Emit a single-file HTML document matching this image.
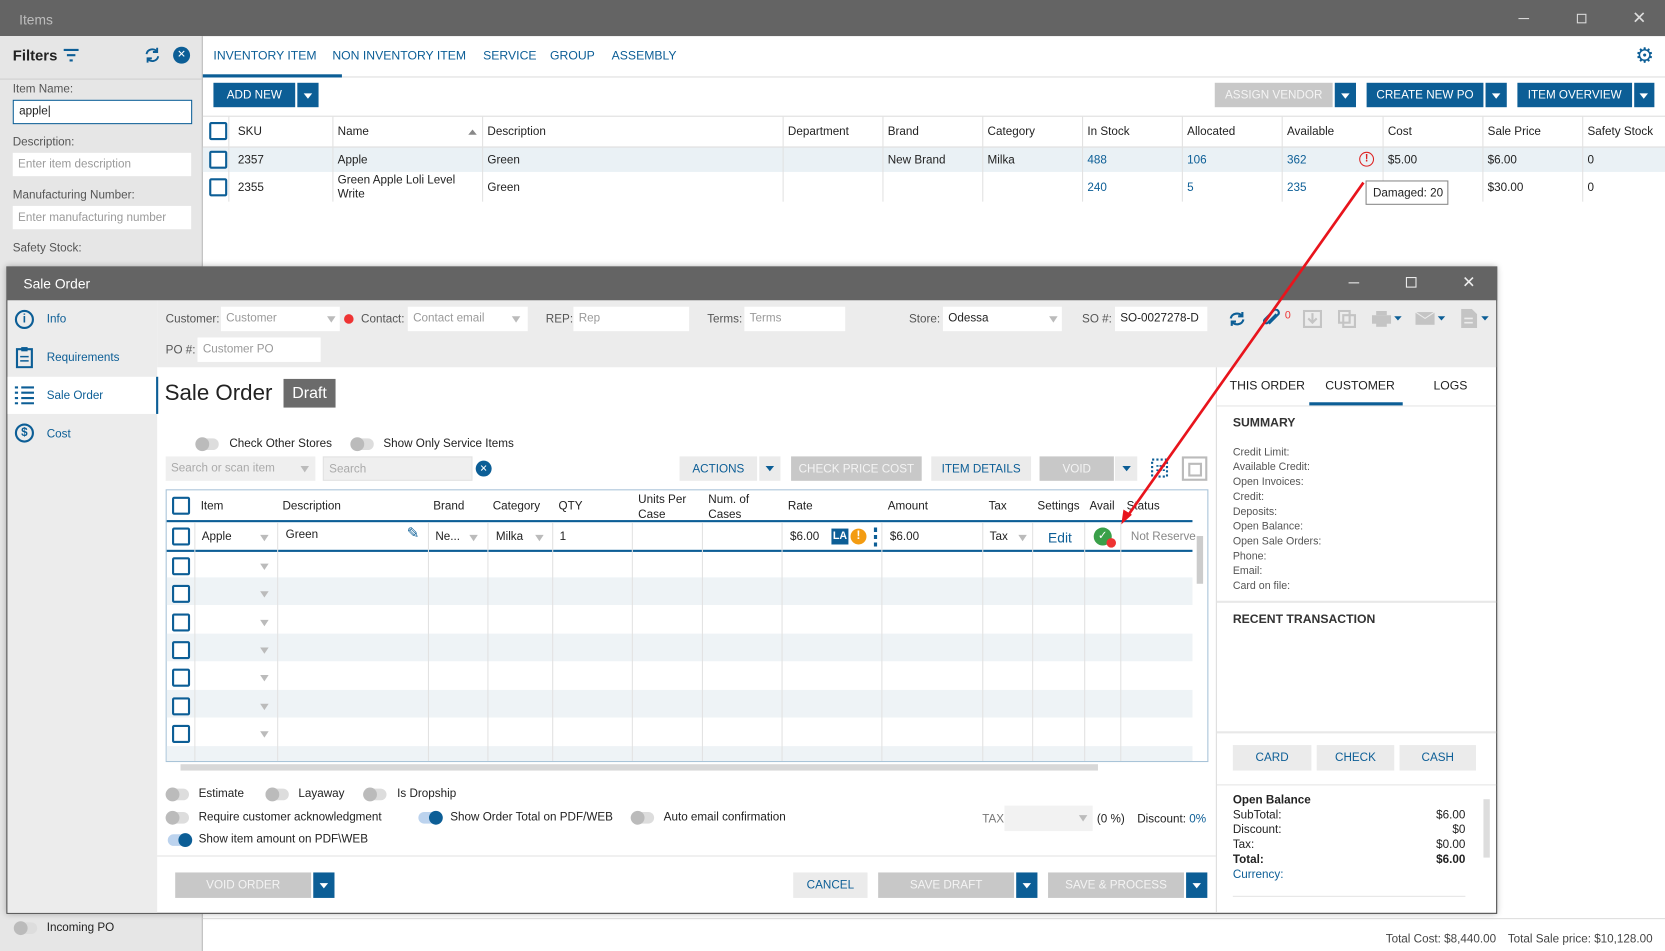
<!DOCTYPE html>
<html><head><meta charset="utf-8"><style>
*{box-sizing:border-box;margin:0;padding:0}
html,body{width:1665px;height:951px;overflow:hidden;background:#fff}
#w{position:absolute;left:0;top:0;width:1568px;height:896px;transform:scale(1.06186,1.06138);transform-origin:0 0;font-family:"Liberation Sans",sans-serif;font-size:11px;color:#222}
.a{position:absolute;white-space:nowrap}
.t{margin-top:1px}
.b{color:#0c5e96}
.btn{position:absolute;background:#0c5e96;color:#fff;text-align:center;font-size:11px}
.gb{position:absolute;background:#c8c8c8;color:#f4f4f4;text-align:center;font-size:11px}
.lb{position:absolute;background:#ebebeb;color:#0c5e96;text-align:center;font-size:11px}
.cb{position:absolute;width:17px;height:17px;border:2px solid #0c5e96;border-radius:2px;background:#fff}
.in{position:absolute;background:#fff;color:#9a9a9a;padding-left:5px;font-size:11px}
.tg{position:absolute;width:22px;height:11px;border-radius:6px;background:#ddd}
.tg:after{content:"";position:absolute;left:0;top:-1px;width:13px;height:13px;border-radius:50%;background:#bbb}
.tg.on{background:#bcd3ee}.tg.on:after{left:10px;background:#0c5e96}
.dd{position:absolute;width:0;height:0;border-left:4px solid transparent;border-right:4px solid transparent;border-top:5px solid #fff}
.gd{position:absolute;width:0;height:0;border-left:4px solid transparent;border-right:4px solid transparent;border-top:6px solid #bbb}
.vl{position:absolute;width:1px;background:#e2e2e2}
.tb{font-size:11.5px}
</style></head><body><div id="w">
<!-- top bar -->
<div class="a" style="left:0;top:0;width:1568px;height:34px;background:#646464"></div>
<div class="a" style="left:18px;top:11px;color:#bdbdbd;font-size:13px">Items</div>
<div class="a" style="left:1430px;top:17px;width:10px;height:1px;background:#ddd"></div>
<div class="a" style="left:1485px;top:13px;width:9px;height:9px;border:1px solid #ddd"></div>
<div class="a" style="left:1537px;top:7px;color:#ddd;font-size:16px">✕</div>
<!-- filter panel -->
<div class="a" style="left:0;top:34px;width:191px;height:862px;background:#e6e6e6;border-right:1px solid #bbb"></div>
<div class="a" style="left:12px;top:44px;font-weight:bold;font-size:14px">Filters</div>
<svg class="a" style="left:59px;top:45px" width="16" height="14"><path d="M1 2h14M4 7h8M6.5 12h3" stroke="#0c5e96" stroke-width="2"/></svg>
<svg class="a" style="left:135px;top:44px" width="17" height="16"><path d="M3 7a5.5 5.5 0 0 1 10-2M14 9a5.5 5.5 0 0 1-10 2" stroke="#0c5e96" stroke-width="1.8" fill="none"/><path d="M13 1v4h-4M4 15v-4h4" stroke="#0c5e96" stroke-width="1.8" fill="none"/></svg>
<div class="a" style="left:163px;top:44px;width:16px;height:16px;border-radius:50%;background:#0c5e96;color:#fff;font-size:10px;text-align:center;line-height:16px">✕</div>
<div class="a" style="left:0;top:74px;width:190px;height:1px;background:#d0d0d0"></div>
<div class="a" style="left:12px;top:78px;color:#555">Item Name:</div>
<div class="in" style="left:12px;top:94px;width:169px;height:23px;border:1px solid #0c5e96;color:#222;line-height:21px">apple|</div>
<div class="a" style="left:12px;top:128px;color:#555">Description:</div>
<div class="in" style="left:12px;top:144px;width:168px;height:22px;line-height:22px">Enter item description</div>
<div class="a" style="left:12px;top:178px;color:#555">Manufacturing Number:</div>
<div class="in" style="left:12px;top:194px;width:168px;height:22px;line-height:22px">Enter manufacturing number</div>
<div class="a" style="left:12px;top:228px;color:#555">Safety Stock:</div>
<div class="tg" style="left:13px;top:869px"></div>
<div class="a" style="left:44px;top:868px">Incoming PO</div>
<!-- tabs -->
<div class="a b tb" style="left:201px;top:47px">INVENTORY ITEM</div>
<div class="a b tb" style="left:313px;top:47px">NON INVENTORY ITEM</div>
<div class="a b tb" style="left:455px;top:47px">SERVICE</div>
<div class="a b tb" style="left:518px;top:47px">GROUP</div>
<div class="a b tb" style="left:576px;top:47px">ASSEMBLY</div>
<div class="a" style="left:191px;top:72px;width:1377px;height:1px;background:#ddd"></div>
<div class="a" style="left:191px;top:70px;width:131px;height:3px;background:#0c5e96"></div>
<div class="a b" style="left:1540px;top:40px;font-size:20px">⚙</div>
<div class="btn" style="left:201px;top:78px;width:77px;height:23px;line-height:24px">ADD NEW</div>
<div class="btn" style="left:280px;top:78px;width:20px;height:23px"></div><div class="dd" style="left:286px;top:88px"></div>
<div class="gb" style="left:1144px;top:78px;width:111px;height:23px;line-height:24px">ASSIGN VENDOR</div>
<div class="btn" style="left:1257px;top:78px;width:20px;height:23px"></div><div class="dd" style="left:1263px;top:88px"></div>
<div class="btn" style="left:1287px;top:78px;width:110px;height:23px;line-height:24px">CREATE NEW PO</div>
<div class="btn" style="left:1399px;top:78px;width:20px;height:23px"></div><div class="dd" style="left:1405px;top:88px"></div>
<div class="btn" style="left:1429px;top:78px;width:108px;height:23px;line-height:24px">ITEM OVERVIEW</div>
<div class="btn" style="left:1539px;top:78px;width:19px;height:23px"></div><div class="dd" style="left:1544px;top:88px"></div>
<!-- items table -->
<div class="a" style="left:191px;top:109px;width:1377px;height:1px;background:#ddd"></div>
<div class="a" style="left:191px;top:138px;width:1377px;height:1px;background:#ddd"></div>
<div class="a" style="left:191px;top:139px;width:1377px;height:23px;background:#eaf1f5"></div>
<div class="vl" style="left:215px;top:110px;height:80px"></div>
<div class="vl" style="left:313px;top:110px;height:80px"></div><div class="vl" style="left:454px;top:110px;height:80px"></div>
<div class="vl" style="left:737px;top:110px;height:80px"></div><div class="vl" style="left:831px;top:110px;height:80px"></div>
<div class="vl" style="left:925px;top:110px;height:80px"></div><div class="vl" style="left:1019px;top:110px;height:80px"></div>
<div class="vl" style="left:1113px;top:110px;height:80px"></div><div class="vl" style="left:1207px;top:110px;height:80px"></div>
<div class="vl" style="left:1302px;top:110px;height:80px"></div><div class="vl" style="left:1396px;top:110px;height:80px"></div>
<div class="vl" style="left:1490px;top:110px;height:80px"></div>
<div class="cb" style="left:197px;top:115px"></div><div class="cb" style="left:197px;top:142px"></div><div class="cb" style="left:197px;top:168px"></div>
<div class="a" style="left:224px;top:118px">SKU</div><div class="a" style="left:318px;top:118px">Name</div>
<div class="gd" style="left:441px;top:122px;border-top:0;border-bottom:5px solid #888"></div>
<div class="a" style="left:459px;top:118px">Description</div><div class="a" style="left:742px;top:118px">Department</div>
<div class="a" style="left:836px;top:118px">Brand</div><div class="a" style="left:930px;top:118px">Category</div>
<div class="a" style="left:1024px;top:118px">In Stock</div><div class="a" style="left:1118px;top:118px">Allocated</div>
<div class="a" style="left:1212px;top:118px">Available</div><div class="a" style="left:1307px;top:118px">Cost</div>
<div class="a" style="left:1401px;top:118px">Sale Price</div><div class="a" style="left:1495px;top:118px">Safety Stock</div>
<div class="a" style="left:224px;top:145px">2357</div><div class="a" style="left:318px;top:145px">Apple</div><div class="a" style="left:459px;top:145px">Green</div>
<div class="a" style="left:836px;top:145px">New Brand</div><div class="a" style="left:930px;top:145px">Milka</div>
<div class="a b" style="left:1024px;top:145px">488</div><div class="a b" style="left:1118px;top:145px">106</div><div class="a b" style="left:1212px;top:145px">362</div>
<div class="a" style="left:1280px;top:143px;width:14px;height:14px;border:1.5px solid #d22;border-radius:50%;color:#d22;font-size:10px;font-weight:bold;text-align:center;line-height:11px">!</div>
<div class="a" style="left:1307px;top:145px">$5.00</div><div class="a" style="left:1401px;top:145px">$6.00</div><div class="a" style="left:1495px;top:145px">0</div>
<div class="a" style="left:224px;top:171px">2355</div><div class="a" style="left:318px;top:164px;line-height:13px">Green Apple Loli Level<br>Write</div><div class="a" style="left:459px;top:171px">Green</div>
<div class="a b" style="left:1024px;top:171px">240</div><div class="a b" style="left:1118px;top:171px">5</div><div class="a b" style="left:1212px;top:171px">235</div>
<div class="a" style="left:1401px;top:171px">$30.00</div><div class="a" style="left:1495px;top:171px">0</div>
<div class="a" style="left:1286px;top:170px;width:78px;height:23px;border:1px solid #888;background:#fff;line-height:22px;padding-left:6px">Damaged: 20</div>
<!-- bottom totals -->
<div class="a" style="left:191px;top:865px;width:1377px;height:1px;background:#ddd"></div>
<div class="a" style="left:1305px;top:879px;color:#444">Total Cost: $8,440.00</div>
<div class="a" style="left:1420px;top:879px;color:#444">Total Sale price: $10,128.00</div>

<!-- SALE ORDER WINDOW -->
<div class="a" style="left:6px;top:251px;width:1404px;height:610px;background:#fff;border:1px solid #444;box-shadow:0 0 6px rgba(0,0,0,.3)"></div>
<div class="a" style="left:6px;top:251px;width:1404px;height:32px;background:#646464"></div>
<div class="a" style="left:22px;top:260px;color:#fff;font-size:13px">Sale Order</div>
<div class="a" style="left:1270px;top:266px;width:10px;height:1px;background:#eee"></div>
<div class="a" style="left:1324px;top:261px;width:10px;height:10px;border:1.5px solid #eee"></div>
<div class="a" style="left:1377px;top:257px;color:#eee;font-size:15px">✕</div>
<!-- nav -->
<div class="a" style="left:7px;top:283px;width:141px;height:577px;background:#ececec"></div>
<div class="a" style="left:7px;top:355px;width:141px;height:35px;background:#fff"></div>
<div class="a" style="left:14px;top:292px;width:18px;height:18px;border:2px solid #0c5e96;border-radius:50%;color:#0c5e96;font-size:11px;font-weight:bold;text-align:center;line-height:14px">i</div>
<div class="a b" style="left:44px;top:295px">Info</div>
<svg class="a" style="left:14px;top:326px" width="18" height="21"><rect x="2" y="3" width="14" height="17" fill="none" stroke="#0c5e96" stroke-width="2"/><rect x="6" y="1" width="6" height="4" fill="#0c5e96"/><path d="M5 10h8M5 14h8" stroke="#0c5e96" stroke-width="1.5"/></svg>
<div class="a b" style="left:44px;top:331px">Requirements</div>
<svg class="a" style="left:13px;top:363px" width="20" height="18"><path d="M1 2h3M7 2h12M1 7h3M7 7h12M1 12h3M7 12h12M1 17h3M7 17h12" stroke="#0c5e96" stroke-width="2"/></svg>
<div class="a b" style="left:44px;top:367px">Sale Order</div>
<div class="a" style="left:14px;top:399px;width:18px;height:18px;border:2px solid #0c5e96;border-radius:50%;color:#0c5e96;font-size:11px;font-weight:bold;text-align:center;line-height:14px">$</div>
<div class="a b" style="left:44px;top:403px">Cost</div>
<!-- header fields -->
<div class="a" style="left:148px;top:283px;width:1261px;height:63px;background:#ececec"></div>
<div class="a" style="left:156px;top:295px;color:#555">Customer:</div>
<div class="in" style="left:208px;top:289px;width:112px;height:23px;line-height:23px">Customer</div><div class="gd" style="left:308px;top:298px"></div>
<div class="a" style="left:324px;top:296px;width:9px;height:9px;border-radius:50%;background:#e33"></div>
<div class="a" style="left:340px;top:295px;color:#555">Contact:</div>
<div class="in" style="left:384px;top:289px;width:113px;height:23px;line-height:23px">Contact email</div><div class="gd" style="left:482px;top:298px"></div>
<div class="a" style="left:514px;top:295px;color:#555">REP:</div>
<div class="in" style="left:540px;top:289px;width:109px;height:23px;line-height:23px">Rep</div>
<div class="a" style="left:666px;top:295px;color:#555">Terms:</div>
<div class="in" style="left:701px;top:289px;width:95px;height:23px;line-height:23px">Terms</div>
<div class="a" style="left:856px;top:295px;color:#555">Store:</div>
<div class="in" style="left:888px;top:289px;width:112px;height:23px;line-height:23px;color:#222">Odessa</div><div class="gd" style="left:988px;top:298px"></div>
<div class="a" style="left:1019px;top:295px;color:#555">SO #:</div>
<div class="in" style="left:1050px;top:289px;width:87px;height:23px;line-height:23px;color:#222">SO-0027278-D</div>
<div class="a" style="left:156px;top:324px;color:#555">PO #:</div>
<div class="in" style="left:186px;top:318px;width:116px;height:23px;line-height:23px">Customer PO</div>
<!-- toolbar icons -->
<svg class="a" style="left:1156px;top:292px" width="18" height="17"><path d="M3 8a6 5.5 0 0 1 11-2M15 9a6 5.5 0 0 1-11 2" stroke="#0c5e96" stroke-width="2" fill="none"/><path d="M14 2v4h-4M4 15v-4h4" stroke="#0c5e96" stroke-width="2" fill="none"/></svg>
<svg class="a" style="left:1188px;top:291px" width="18" height="18"><path d="M14 5l-8 8a2 2 0 0 1-3-3l9-9a3 3 0 0 1 4 4l-9 9" stroke="#0c5e96" stroke-width="2" fill="none"/></svg>
<div class="a" style="left:1210px;top:292px;color:#e33;font-size:10px">0</div>
<svg class="a" style="left:1227px;top:292px" width="18" height="17"><path d="M1 1h16v15H1z M9 3v9M5 8l4 4 4-4" stroke="#c4c4c4" stroke-width="2" fill="none"/></svg>
<svg class="a" style="left:1260px;top:292px" width="17" height="17"><path d="M1 1h10v11H1z M5 5h11v11H5z" stroke="#c4c4c4" stroke-width="2" fill="#ececec"/></svg>
<svg class="a" style="left:1292px;top:293px" width="30" height="15"><rect x="0" y="4" width="18" height="8" fill="#c4c4c4"/><rect x="4" y="0" width="10" height="4" fill="#c4c4c4"/><rect x="4" y="10" width="10" height="5" fill="#c4c4c4"/><path d="M21 5h7l-3.5 4z" fill="#0c5e96"/></svg>
<svg class="a" style="left:1333px;top:294px" width="30" height="13"><rect x="0" y="0" width="18" height="12" fill="#c4c4c4"/><path d="M0 0l9 6 9-6" stroke="#ececec" fill="none"/><path d="M21 4h7l-3.5 4z" fill="#0c5e96"/></svg>
<svg class="a" style="left:1376px;top:291px" width="28" height="18"><path d="M0 0h10l5 5v13H0z" fill="#c4c4c4"/><path d="M3 9h8M3 13h8" stroke="#ececec" stroke-width="1.5"/><path d="M19 7h7l-3.5 4z" fill="#0c5e96"/></svg>
<!-- title -->
<div class="a" style="left:147px;top:355px;width:2px;height:35px;background:#0c5e96"></div>
<div class="a" style="left:155px;top:359px;font-size:21px;color:#222">Sale Order</div>
<div class="a" style="left:267px;top:357px;width:49px;height:27px;background:#6b6b6b;color:#fff;font-size:15px;text-align:center;line-height:27px">Draft</div>
<div class="tg" style="left:184px;top:413px"></div><div class="a" style="left:216px;top:412px">Check Other Stores</div>
<div class="tg" style="left:330px;top:413px"></div><div class="a" style="left:361px;top:412px">Show Only Service Items</div>
<div class="a" style="left:156px;top:430px;width:141px;height:23px;background:#efefef;color:#aaa;padding-left:5px;line-height:23px">Search or scan item</div><div class="gd" style="left:283px;top:439px"></div>
<div class="a" style="left:304px;top:430px;width:141px;height:23px;background:#efefef;color:#aaa;padding-left:5px;line-height:23px;border:1px solid #e2e2e2">Search</div>
<div class="a" style="left:448px;top:434px;width:15px;height:15px;border-radius:50%;background:#0c5e96;color:#fff;font-size:9px;text-align:center;line-height:15px">✕</div>
<div class="lb" style="left:640px;top:430px;width:73px;height:23px;line-height:24px">ACTIONS</div>
<div class="lb" style="left:715px;top:430px;width:20px;height:23px"></div><div class="dd" style="left:721px;top:439px;border-top-color:#0c5e96"></div>
<div class="gb" style="left:745px;top:430px;width:123px;height:23px;line-height:24px">CHECK PRICE COST</div>
<div class="lb" style="left:877px;top:430px;width:94px;height:23px;line-height:24px">ITEM DETAILS</div>
<div class="gb" style="left:979px;top:430px;width:70px;height:23px;line-height:24px">VOID</div>
<div class="lb" style="left:1050px;top:430px;width:21px;height:23px"></div><div class="dd" style="left:1057px;top:439px;border-top-color:#0c5e96"></div>
<svg class="a" style="left:1083px;top:431px" width="18" height="20"><path d="M2 2h14v16H2z" stroke="#0c5e96" stroke-width="2" stroke-dasharray="2 2" fill="none"/><path d="M6 8h8M6 12h8" stroke="#0c5e96" stroke-width="1.5" stroke-dasharray="2 1"/></svg>
<div class="a" style="left:1113px;top:430px;width:24px;height:23px;border:2px solid #bbb;background:#fff"></div><div class="a" style="left:1119px;top:436px;width:13px;height:13px;border:2px solid #bbb"></div>
<!-- SO table -->
<div class="a" style="left:156px;top:461px;width:982px;height:257px;border:1px solid #a8c3d8"></div>
<div class="a" style="left:157px;top:544px;width:966px;height:26px;background:#eef3f6"></div>
<div class="a" style="left:157px;top:597px;width:966px;height:26px;background:#eef3f6"></div>
<div class="a" style="left:157px;top:650px;width:966px;height:26px;background:#eef3f6"></div>
<div class="a" style="left:157px;top:703px;width:966px;height:14px;background:#eef3f6"></div>
<div class="a" style="left:157px;top:490px;width:966px;height:2px;background:#0c5e96"></div>
<div class="a" style="left:157px;top:518px;width:966px;height:2px;background:#0c5e96"></div>
<div class="vl" style="left:183px;top:492px;height:225px"></div><div class="vl" style="left:261px;top:492px;height:225px"></div>
<div class="vl" style="left:403px;top:492px;height:225px"></div><div class="vl" style="left:459px;top:492px;height:225px"></div>
<div class="vl" style="left:520px;top:492px;height:225px"></div><div class="vl" style="left:595px;top:492px;height:225px"></div>
<div class="vl" style="left:661px;top:492px;height:225px"></div><div class="vl" style="left:736px;top:492px;height:225px"></div>
<div class="vl" style="left:830px;top:492px;height:225px"></div><div class="vl" style="left:925px;top:492px;height:225px"></div>
<div class="vl" style="left:972px;top:492px;height:225px"></div><div class="vl" style="left:1021px;top:492px;height:225px"></div>
<div class="vl" style="left:1055px;top:492px;height:225px"></div>
<div class="cb" style="left:162px;top:468px"></div>
<div class="a" style="left:189px;top:471px">Item</div><div class="a" style="left:266px;top:471px">Description</div>
<div class="a" style="left:408px;top:471px">Brand</div><div class="a" style="left:464px;top:471px">Category</div>
<div class="a" style="left:526px;top:471px">QTY</div><div class="a" style="left:601px;top:464px;line-height:14px">Units Per<br>Case</div>
<div class="a" style="left:667px;top:464px;line-height:14px">Num. of<br>Cases</div>
<div class="a" style="left:742px;top:471px">Rate</div><div class="a" style="left:836px;top:471px">Amount</div>
<div class="a" style="left:931px;top:471px">Tax</div><div class="a" style="left:977px;top:471px">Settings</div>
<div class="a" style="left:1026px;top:471px">Avail</div><div class="a" style="left:1061px;top:471px">Status</div>
<div class="cb" style="left:162px;top:497px"></div>
<div class="a" style="left:190px;top:500px">Apple</div><div class="gd" style="left:245px;top:504px"></div>
<div class="a" style="left:269px;top:498px">Green</div><div class="a b" style="left:383px;top:494px;font-size:14px">✎</div>
<div class="a" style="left:410px;top:500px">Ne...</div><div class="gd" style="left:442px;top:504px"></div>
<div class="a" style="left:467px;top:500px">Milka</div><div class="gd" style="left:504px;top:504px"></div>
<div class="a" style="left:527px;top:500px">1</div>
<div class="a" style="left:744px;top:500px">$6.00</div>
<div class="a" style="left:783px;top:498px;width:16px;height:15px;background:#0c5e96;color:#fff;font-size:10px;font-weight:bold;text-align:center;line-height:15px">LA</div>
<div class="a" style="left:801px;top:498px;width:15px;height:15px;border-radius:50%;background:#f39c12;color:#fff;font-size:11px;font-weight:bold;text-align:center;line-height:15px">!</div>
<div class="a" style="left:823px;top:497px;width:3px;height:18px;background:repeating-linear-gradient(#0c5e96 0 4px,transparent 4px 7px)"></div>
<div class="a" style="left:838px;top:500px">$6.00</div>
<div class="a" style="left:932px;top:500px">Tax</div><div class="gd" style="left:959px;top:504px"></div>
<div class="a b" style="left:987px;top:499px;font-size:13px">Edit</div>
<div class="a" style="left:1030px;top:497px;width:17px;height:17px;border-radius:50%;background:#3aa04a;color:#fff;font-size:11px;text-align:center;line-height:17px">✓</div>
<div class="a" style="left:1042px;top:507px;width:9px;height:9px;border-radius:50%;background:#e33"></div>
<div class="a" style="left:1065px;top:500px;color:#888">Not Reserve</div>
<div class="cb" style="left:162px;top:525px"></div><div class="gd" style="left:245px;top:531px"></div>
<div class="cb" style="left:162px;top:551px"></div><div class="gd" style="left:245px;top:557px"></div>
<div class="cb" style="left:162px;top:578px"></div><div class="gd" style="left:245px;top:584px"></div>
<div class="cb" style="left:162px;top:604px"></div><div class="gd" style="left:245px;top:610px"></div>
<div class="cb" style="left:162px;top:630px"></div><div class="gd" style="left:245px;top:636px"></div>
<div class="cb" style="left:162px;top:657px"></div><div class="gd" style="left:245px;top:663px"></div>
<div class="cb" style="left:162px;top:683px"></div><div class="gd" style="left:245px;top:689px"></div>
<div class="a" style="left:1127px;top:505px;width:6px;height:45px;background:#ccc"></div>
<div class="a" style="left:170px;top:720px;width:864px;height:6px;background:#d8d8d8"></div>
<!-- options -->
<div class="tg" style="left:156px;top:743px"></div><div class="a" style="left:187px;top:742px">Estimate</div>
<div class="tg" style="left:250px;top:743px"></div><div class="a" style="left:281px;top:742px">Layaway</div>
<div class="tg" style="left:342px;top:743px"></div><div class="a" style="left:374px;top:742px">Is Dropship</div>
<div class="tg" style="left:156px;top:765px"></div><div class="a" style="left:187px;top:764px">Require customer acknowledgment</div>
<div class="tg on" style="left:394px;top:765px"></div><div class="a" style="left:424px;top:764px">Show Order Total on PDF/WEB</div>
<div class="tg" style="left:594px;top:765px"></div><div class="a" style="left:625px;top:764px">Auto email confirmation</div>
<div class="a" style="left:925px;top:766px;color:#777;font-size:11px">TAX</div>
<div class="a" style="left:946px;top:759px;width:83px;height:24px;background:#f2f2f2"></div><div class="gd" style="left:1016px;top:768px"></div>
<div class="a" style="left:1033px;top:766px;font-size:11px">(0 %)</div>
<div class="a" style="left:1071px;top:766px">Discount: <span class="b">0%</span></div>
<div class="tg on" style="left:158px;top:786px"></div><div class="a" style="left:187px;top:785px">Show item amount on PDF\WEB</div>
<div class="a" style="left:148px;top:806px;width:997px;height:1px;background:#e2e2e2"></div>
<div class="gb" style="left:165px;top:822px;width:128px;height:24px;line-height:25px">VOID ORDER</div>
<div class="btn" style="left:295px;top:822px;width:20px;height:24px"></div><div class="dd" style="left:301px;top:832px"></div>
<div class="lb" style="left:747px;top:822px;width:70px;height:24px;line-height:25px">CANCEL</div>
<div class="gb" style="left:827px;top:822px;width:128px;height:24px;line-height:25px">SAVE DRAFT</div>
<div class="btn" style="left:957px;top:822px;width:20px;height:24px"></div><div class="dd" style="left:963px;top:832px"></div>
<div class="gb" style="left:987px;top:822px;width:128px;height:24px;line-height:25px">SAVE &amp; PROCESS</div>
<div class="btn" style="left:1117px;top:822px;width:20px;height:24px"></div><div class="dd" style="left:1123px;top:832px"></div>
<!-- right panel -->
<div class="a" style="left:1145px;top:346px;width:1px;height:514px;background:#ddd"></div>
<div class="a" style="left:1158px;top:358px;font-size:11.5px">THIS ORDER</div>
<div class="a" style="left:1248px;top:358px;font-size:11.5px">CUSTOMER</div>
<div class="a" style="left:1350px;top:358px;font-size:11.5px">LOGS</div>
<div class="a" style="left:1233px;top:379px;width:88px;height:3px;background:#0c5e96"></div>
<div class="a" style="left:1146px;top:382px;width:263px;height:1px;background:#e4e4e4"></div>
<div class="a" style="left:1161px;top:393px;font-size:11.5px;font-weight:bold;color:#333">SUMMARY</div>
<div class="a" style="left:1161px;top:420px;font-size:10px;color:#555;line-height:14px">Credit Limit:<br>Available Credit:<br>Open Invoices:<br>Credit:<br>Deposits:<br>Open Balance:<br>Open Sale Orders:<br>Phone:<br>Email:<br>Card on file:</div>
<div class="a" style="left:1146px;top:566px;width:263px;height:2px;background:#e8e8e8"></div>
<div class="a" style="left:1161px;top:578px;font-size:11.5px;font-weight:bold;color:#333">RECENT TRANSACTION</div>
<div class="a" style="left:1146px;top:689px;width:263px;height:2px;background:#e8e8e8"></div>
<div class="lb" style="left:1161px;top:702px;width:74px;height:24px;line-height:25px">CARD</div>
<div class="lb" style="left:1240px;top:702px;width:73px;height:24px;line-height:25px">CHECK</div>
<div class="lb" style="left:1318px;top:702px;width:72px;height:24px;line-height:25px">CASH</div>
<div class="a" style="left:1146px;top:739px;width:263px;height:1px;background:#e4e4e4"></div>
<div class="a" style="left:1161px;top:747px;font-size:11px;line-height:14px;width:219px;white-space:normal">
<b>Open Balance</b><br>
<div style="display:flex;justify-content:space-between"><span>SubTotal:</span><span>$6.00</span></div>
<div style="display:flex;justify-content:space-between"><span>Discount:</span><span>$0</span></div>
<div style="display:flex;justify-content:space-between"><span>Tax:</span><span>$0.00</span></div>
<div style="display:flex;justify-content:space-between;font-weight:bold"><span>Total:</span><span>$6.00</span></div>
<span class="b">Currency:</span></div>
<div class="a" style="left:1161px;top:844px;width:219px;height:1px;background:#e4e4e4"></div>
<div class="a" style="left:1397px;top:753px;width:6px;height:55px;background:#ddd"></div>
<!-- red arrow -->
<svg class="a" style="left:0;top:0" width="1568" height="896"><path d="M1284 172L1062 486" stroke="#e8141c" stroke-width="2.5"/><path d="M1056 494l2-14 8 5z" fill="#e8141c"/></svg>
</div></body></html>
